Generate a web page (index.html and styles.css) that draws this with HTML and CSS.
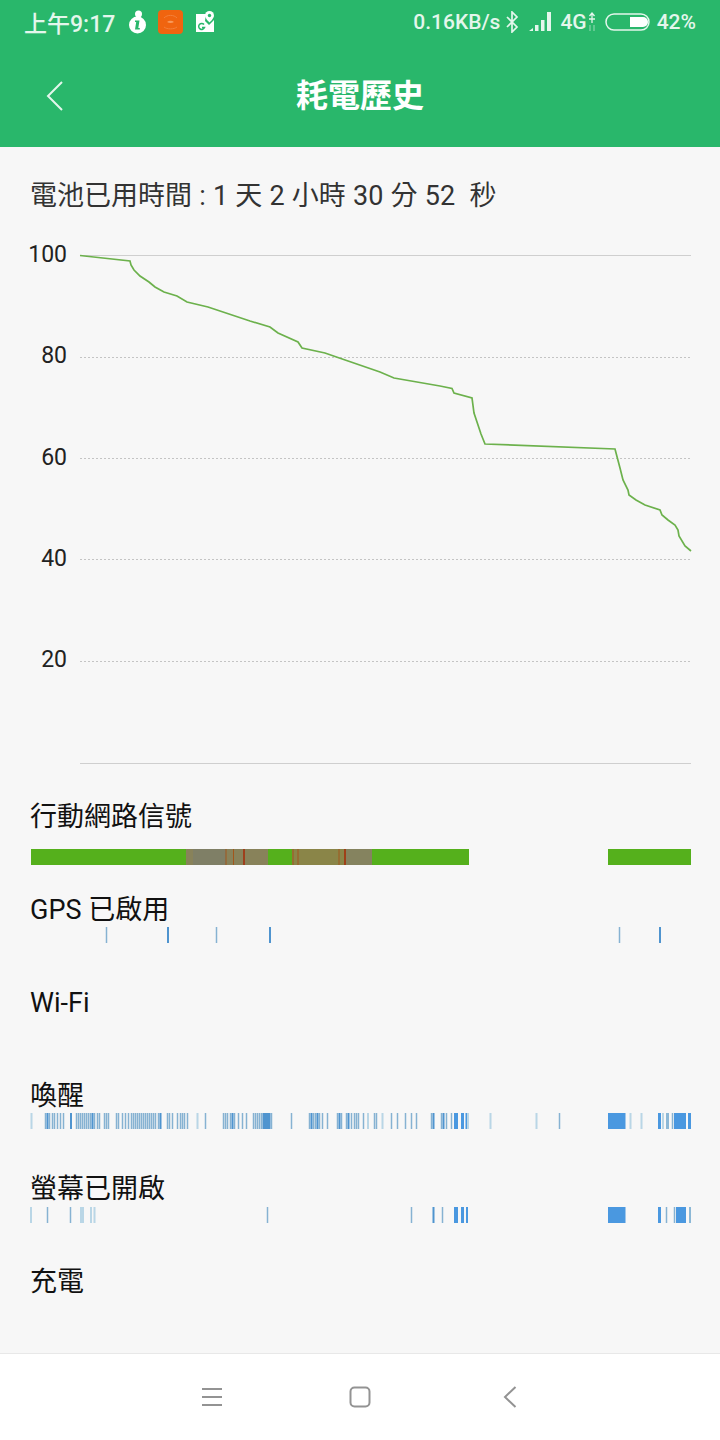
FILE: index.html
```html
<!DOCTYPE html>
<html lang="zh-TW">
<head>
    <meta charset="UTF-8">
    <meta name="viewport" content="width=device-width, initial-scale=1.0">
    <title>耗電歷史</title>
    <link rel="stylesheet" href="styles.css">
</head>
<body>
<div class="container">
    <header>
        <div class="status-bar">
            <div class="status-left">
                <span class="clock">上午9:17</span>
                <svg class="icon-info" width="19" height="24" viewBox="0 0 19 24">
                    <circle cx="10.500" cy="4" r="3.500" fill="#fff"/>
                    <circle cx="9.500" cy="15" r="8.500" fill="#fff"/>
                    <path d="M7 10.500h4.500l-1.200 7.500h1.500v1.500H7l1.200-7.500H7z" fill="#29b76b"/>
                </svg>
                <svg class="icon-app" width="25" height="24" viewBox="0 0 25 24">
                    <rect width="25" height="24" rx="4" fill="#f0640f"/>
                    <path d="M9 12c2-1.800 5-1.800 7 0-2 1.200-5 1.200-7 0z" fill="#f79a5c"/>
                    <path d="M6 8c3-3.500 10-3.500 13 0M6 17c3 2.500 10 2.500 13 0" stroke="#f4803a" fill="none"/>
                </svg>
                <svg class="icon-map" width="20" height="22" viewBox="0 0 20 22">
                    <path d="M1 3h10l-1 7 4 4 5-5v12H1z" fill="#fff"/>
                    <path d="M14.500 0a4.500 4.500 0 0 1 4.500 4.500c0 3-4.500 7-4.500 7s-4.500-4-4.500-7A4.500 4.500 0 0 1 14.500 0z" fill="#fff"/>
                    <circle cx="14.500" cy="4.500" r="1.700" fill="#29b76b"/>
                    <path d="M9 13.500a3 3 0 1 0 .5 3H7" fill="none" stroke="#29b76b" stroke-width="1.500"/>
                </svg>
            </div>
            <div class="status-right">
                <span class="speed">0.16KB/s</span>
                <svg class="icon-bt" width="15" height="22" viewBox="0 0 15 22">
                    <path d="M2 6l10 10-5 5V1l5 5L2 16" fill="none" stroke="#e4f6ec" stroke-width="1.700"/>
                </svg>
                <svg class="icon-signal" width="22" height="20" viewBox="0 0 22 20">
                    <path d="M0 19l4-3v3zM6 13h3.500v6H6zM12 8h3.500v11H12zM18 0h4v19h-4z" fill="#e4f6ec"/>
                </svg>
                <span class="net">4G</span>
                <svg class="icon-arrows" width="8" height="20" viewBox="0 0 8 20">
                    <path d="M4 1v10M1.500 4L4 1l2.500 3M1 7h6" fill="none" stroke="#e4f6ec" stroke-width="1.300"/>
                    <path d="M2 13v6M6 13v6" stroke="#e4f6ec" stroke-opacity=".6"/>
                </svg>
                <svg class="icon-battery" width="45" height="20" viewBox="0 0 45 20">
                    <rect x="1" y="2" width="43" height="16" rx="8" fill="none" stroke="#e4f6ec" stroke-width="1.500"/>
                    <path d="M25 5h13a5 5 0 0 1 0 10H25z" fill="#fff"/>
                </svg>
                <span class="percent">42%</span>
            </div>
        </div>
        <div class="title-bar">
            <svg class="back" width="18" height="30" viewBox="0 0 18 30">
                <path d="M16 1L2 15l14 14" fill="none" stroke="#e4f6ec" stroke-width="2"/>
            </svg>
            <h1>耗電歷史</h1>
        </div>
    </header>

    <div class="content">
        <div class="battery-time">電池已用時間 : 1 天 2 小時 30 分 52&nbsp; 秒</div>

        <svg class="chart" width="720" height="568" viewBox="0 230 720 568">
            <path class="line-solid" d="M80 255.500H691M80 763.500H691"/>
            <path class="line-dot" d="M80 357.500H691M80 458.500H691M80 559.500H691M80 661.500H691"/>
            <text class="axis" x="67" y="262">100</text>
            <text class="axis" x="67" y="363">80</text>
            <text class="axis" x="67" y="465">60</text>
            <text class="axis" x="67" y="566">40</text>
            <text class="axis" x="67" y="667">20</text>
            <polyline class="curve" points="80,255.500 130,261 131,265 134,270 140,276 149,282 155,287 164,292 177,296 187,302 208,307 250,321 270,327 278,333 298,342 302,348 325,353 335,356.500 380,372 394,378 440,386 452,388.500 454,393 472,398 474,413 477,422 481,434 485,444 615,449 620,468 623,480 628,490 629,495 636,500 645,505 660,510 662,515 668,520 675,525 678,530 679,536 685,546 691,551"/>
        </svg>

        <div class="row row-signal">
            <div class="row-label">行動網路信號</div>
            <svg class="track" width="720" height="16" viewBox="0 0 720 16">
                <rect x="31" width="438" height="16" fill="#55b01c"/>
                <rect x="608" width="83" height="16" fill="#55b01c"/>
                <rect x="186" width="82" height="16" fill="#88825a"/>
                <rect x="193" width="33" height="16" fill="#7f7f66"/>
                <rect x="292" width="80" height="16" fill="#8a8548"/>
                <rect x="346" width="26" height="16" fill="#85835f"/>
                <path d="M226 0v16M233.500 0v16M293 0v16M298 0v16M339 0v16" stroke="#a2561c" stroke-width="1"/>
                <path d="M244 0v16M345 0v16" stroke="#a52a08" stroke-width="1.500"/>
            </svg>
        </div>
        <div class="row">
            <div class="row-label">GPS 已啟用</div>
            <svg class="track" width="720" height="16" viewBox="0 0 720 16">
                <path class="bar-mid" d="M106.500 0v16M216.500 0v16M619.500 0v16"/>
                <path class="bar-dark" d="M168 0v16M270 0v16M660 0v16"/>
            </svg>
        </div>
        <div class="row">
            <div class="row-label">Wi-Fi</div>
            <div class="track-empty"></div>
        </div>
        <div class="row">
            <div class="row-label">喚醒</div>
            <svg class="track" width="720" height="16" viewBox="0 0 720 16">
                <path class="bar-light" d="M31.500 0v16M197.500 0v16M368 0v16M382.500 0v16M468 0v16M490.500 0v16M536.500 0v16M630.500 0v16M641.500 0v16M663 0v16"/>
                <path class="bar-mid" d="M45.500 0v16M49.500 0v16M52.500 0v16M54.500 0v16M57.500 0v16M60.500 0v16M63.500 0v16M76.500 0v16M78.500 0v16M80.500 0v16M82.500 0v16M84.500 0v16M86.500 0v16M88.500 0v16M90.500 0v16M94.500 0v16M97.500 0v16M99.500 0v16M104.500 0v16M106.500 0v16M108.500 0v16M116.500 0v16M118.500 0v16M122.500 0v16M125.500 0v16M128.500 0v16M131.500 0v16M133.500 0v16M135.500 0v16M137.500 0v16M139.500 0v16M141.500 0v16M143.500 0v16M145.500 0v16M147.500 0v16M149.500 0v16M151.500 0v16M153.500 0v16M155.500 0v16M158.500 0v16M167.500 0v16M169.500 0v16M172.500 0v16M177.500 0v16M180.500 0v16M182.500 0v16M184.500 0v16M187.500 0v16M205.500 0v16M223.500 0v16M225.500 0v16M227.500 0v16M230.500 0v16M234.500 0v16M238.500 0v16M242.500 0v16M246.500 0v16M253.500 0v16M255.500 0v16M257.500 0v16M259.500 0v16M261.500 0v16M271.500 0v16M291.500 0v16M309.500 0v16M313.500 0v16M315.500 0v16M319.500 0v16M322.500 0v16M327.500 0v16M337.500 0v16M341.500 0v16M346.500 0v16M351.500 0v16M354.500 0v16M356.500 0v16M358.500 0v16M363.500 0v16M374.500 0v16M376.500 0v16M391.500 0v16M397.500 0v16M405.500 0v16M411.500 0v16M416.500 0v16M431.500 0v16M441.500 0v16M446.500 0v16M451.500 0v16M559.500 0v16M672.500 0v16"/>
                <path class="bar-dark" d="M47.500 0v16M71 0v16M92.500 0v16M160.500 0v16M232.500 0v16M263.500 0v16M265.500 0v16M267.500 0v16M269.500 0v16M311.500 0v16M317.500 0v16M339.500 0v16M348.500 0v16M433.500 0v16M443.500 0v16"/>
                <rect class="block" x="454" width="4" height="16"/>
                <rect class="block" x="461" width="3" height="16"/>
                <rect class="block" x="465.500" width="1.500" height="16"/>
                <rect class="block" x="608" width="17.500" height="16"/>
                <rect class="block" x="658" width="3" height="16"/>
                <rect class="block-soft" x="666" width="3" height="16"/>
                <rect class="block" x="674" width="12" height="16"/>
                <rect class="block" x="688" width="3" height="16"/>
            </svg>
        </div>
        <div class="row row-screen">
            <div class="row-label">螢幕已開啟</div>
            <svg class="track" width="720" height="16" viewBox="0 0 720 16">
                <path class="bar-light" d="M31 0v16M81 0v16M83 0v16M91 0v16M94.500 0v16"/>
                <path class="bar-mid" d="M47.500 0v16M70.500 0v16M267.500 0v16M411.500 0v16M442.500 0v16M666.500 0v16M674.500 0v16"/>
                <path class="bar-dark" d="M433.500 0v16"/>
                <rect class="block" x="454" width="4" height="16"/>
                <rect class="block" x="461" width="3" height="16"/>
                <rect class="block" x="466" width="2" height="16"/>
                <rect class="block" x="608" width="17.500" height="16"/>
                <rect class="block" x="658" width="3" height="16"/>
                <rect class="block" x="676" width="10" height="16"/>
                <rect class="block-soft" x="689" width="2" height="16"/>
            </svg>
        </div>
        <div class="row">
            <div class="row-label">充電</div>
            <div class="track-empty"></div>
        </div>
    </div>

    <nav class="nav-bar">
        <svg class="nav-menu" width="22" height="20" viewBox="0 0 22 20">
            <path d="M1 2h20M1 10h20M1 18h20" fill="none" stroke="#939393" stroke-width="2"/>
        </svg>
        <svg class="nav-home" width="22" height="22" viewBox="0 0 22 22">
            <rect x="1.500" y="1.500" width="19" height="19" rx="4" fill="none" stroke="#939393" stroke-width="2"/>
        </svg>
        <svg class="nav-back" width="14" height="22" viewBox="0 0 14 22">
            <path d="M12.500 1L2 11l10.500 10" fill="none" stroke="#939393" stroke-width="2"/>
        </svg>
    </nav>
</div>
</body>
</html>
```

FILE: styles.css
```css
body {
    font-family: Roboto, "Noto Sans CJK TC", sans-serif;
    margin: 0;
    padding: 0;
    background-color: #f7f7f7;
}
.container {
    display: flex;
    flex-direction: column;
    width: 720px;
    height: 1440px;
    overflow: hidden;
}
header {
    background: #29b76b;
    color: white;
    height: 147px;
    flex-shrink: 0;
}
.status-bar {
    display: flex;
    justify-content: space-between;
    align-items: center;
    height: 44px;
    padding: 0 24px;
    font-size: 21px;
    font-weight: 500;
    color: #e4f6ec;
}
.status-left,
.status-right {
    display: flex;
    align-items: center;
}
.clock {
    margin-right: 13px;
    font-size: 23px;
}
.icon-app {
    margin-left: 11px;
}
.icon-map {
    margin-left: 12px;
}
.icon-bt {
    margin-left: 5px;
}
.icon-signal {
    margin-left: 9px;
}
.net {
    margin-left: 9px;
}
.icon-arrows {
    margin-left: 1px;
}
.icon-battery {
    margin-left: 9px;
}
.percent {
    margin-left: 7px;
}
.title-bar {
    display: flex;
    align-items: center;
    justify-content: center;
    height: 103px;
    position: relative;
}
.title-bar h1 {
    margin: 0 0 6px;
    font-size: 32px;
    font-weight: 700;
}
.back {
    position: absolute;
    left: 46px;
    top: 37px;
}
.content {
    flex: 1;
    min-height: 0;
}
.battery-time {
    height: 83px;
    line-height: 98px;
    padding-left: 30px;
    font-size: 27px;
    word-spacing: 0.5px;
    color: #333;
}
.chart {
    display: block;
}
.line-solid {
    stroke: #cfcfcf;
    stroke-width: 1;
    fill: none;
}
.line-dot {
    stroke: #c4c4c4;
    stroke-width: 1;
    stroke-dasharray: 2 2;
    fill: none;
}
.axis {
    font-size: 23px;
    fill: #222;
    text-anchor: end;
}
.curve {
    fill: none;
    stroke: #6cb14c;
    stroke-width: 1.700;
}
.row {
    margin-bottom: 41px;
}
.row-signal {
    margin-bottom: 26px;
}
.row-signal .row-label {
    margin-bottom: 15px;
}
.row-screen {
    margin-bottom: 40px;
}
.row-screen .row-label {
    margin-bottom: 1px;
}
.row-label {
    height: 36px;
    line-height: 38px;
    padding-left: 30px;
    font-size: 27px;
    color: #111;
}
.track {
    display: block;
}
.track-empty {
    height: 16px;
}
.bar-light {
    stroke: #b9d6e6;
    stroke-width: 2;
}
.bar-mid {
    stroke: #86b2d2;
    stroke-width: 1.500;
}
.bar-dark {
    stroke: #4f94cf;
    stroke-width: 2;
}
.block {
    fill: #4a98e0;
}
.block-soft {
    fill: #8cb8d6;
}
.nav-bar {
    display: flex;
    align-items: center;
    height: 86px;
    padding-left: 201px;
    background: #fff;
    border-top: 1px solid #e8e8e8;
    flex-shrink: 0;
}
.nav-home {
    margin-left: 126px;
}
.nav-back {
    margin-left: 132px;
}
```
